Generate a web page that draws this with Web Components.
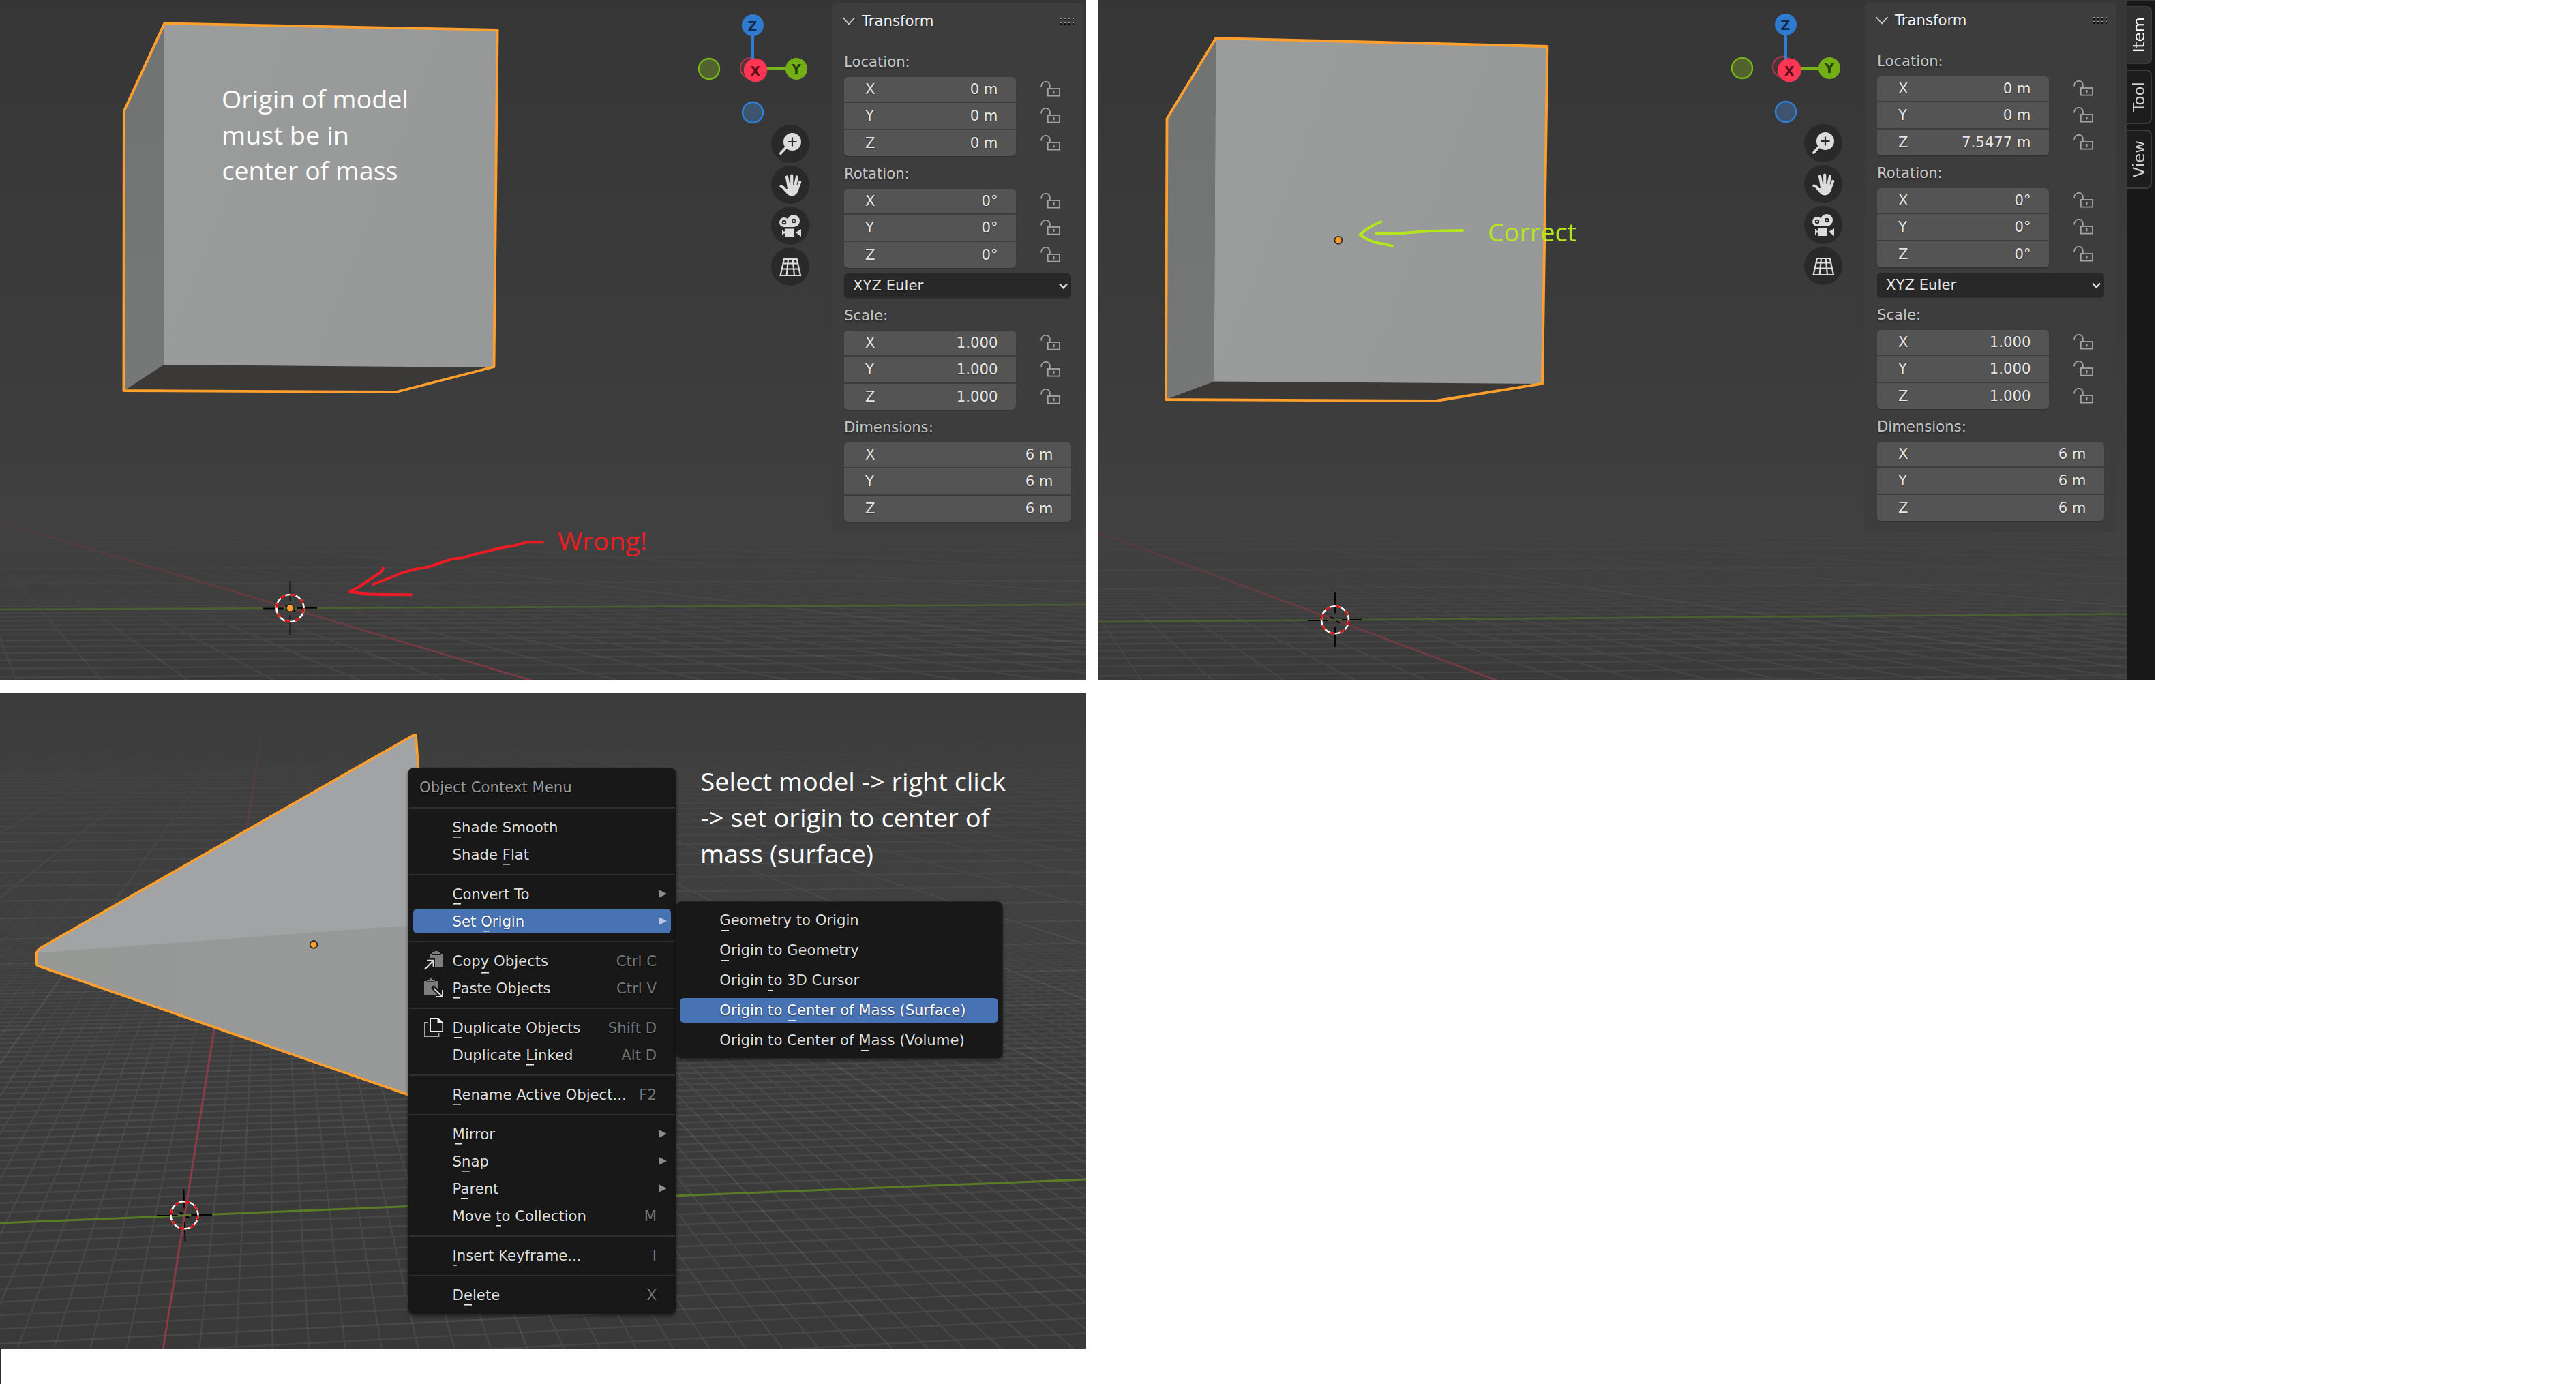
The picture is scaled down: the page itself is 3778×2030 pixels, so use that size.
<!DOCTYPE html>
<html lang="en">
<head>
<meta charset="utf-8">
<title>Setting the model origin</title>
<style>
html,body{margin:0;background:#fff}
body{font-family:"DejaVu Sans",sans-serif;font-size:21.2px;color:#e6e6e6;width:3778px;height:2030px;overflow:hidden}
</style>
</head>
<body>
<guide-page></guide-page>
<script>
const define = (name, html) => customElements.define(name, class extends HTMLElement {
  connectedCallback() {
    if (this.shadowRoot) return;
    const a = (k, d = '') => this.getAttribute(k) ?? d;
    this.attachShadow({mode: 'open'}).innerHTML = typeof html === 'function' ? html(a) : html;
  }
});

/* ---------- 3D scenes ---------- */
/* Perspective floor: row k lies 1/(d0 - s*k) below the horizon h, columns fan out of (px, py). */
function floor(o) {
  let minor = '', major = '';
  const r = o.right + 5, l = o.left - 5;
  for (let k = -400; k <= 40; k++) {
    const d = o.d0 - o.s * k;
    if (k === 0 || d <= 0) continue;
    const t = 1 / d, y = o.h + t, slope = (o.vy - y) / o.vx;
    const big = k % 10 === 0, gap = o.s * t * t * (big ? 10 : 1);
    const op = Math.min(1, Math.max(0, (gap - .8) / 4));
    if (op < .02) continue;
    const line = `<path d="M${l} ${(y + slope * (l - o.left)).toFixed(1)}L${r} ${(y + slope * (r - o.left)).toFixed(1)}" stroke-opacity="${op.toFixed(2)}"/>`;
    if (big) major += line; else minor += line;
  }
  for (let k = -60; k <= 90; k++) {
    if (k === 0) continue;
    const x = o.cx + o.step * k;
    if (k % 10 === 0) major += `<path d="M${o.px} ${o.py}L${x} ${o.base}"/>`;
    else minor += `<path d="M${o.px} ${o.py}L${x} ${o.base}"/>`;
  }
  for (let k = 10; k <= 60; k++) major += `<path d="M${o.px} ${o.py}L${o.cx + o.step * 10 * k} ${o.base}"/>`;
  const w = r - l;
  const g = (id, a, b) => `<linearGradient id="g${id}" gradientUnits="userSpaceOnUse" x1="0" x2="0" y1="${o.h + a}" y2="${o.h + b}"><stop offset="0" stop-color="#000"/><stop offset="1" stop-color="#fff"/></linearGradient><mask id="m${id}" maskUnits="userSpaceOnUse" x="${l}" y="0" width="${w}" height="2030"><rect x="${l}" y="0" width="${w}" height="2030" fill="url(#g${id})"/></mask>`;
  return `<defs>${g('a', ...o.fadeMinor)}${g('b', ...o.fadeMajor)}</defs>
  <g fill="none" stroke="#fff" stroke-width="2.4"><g mask="url(#ma)" opacity="${o.alpha}">${minor}</g><g mask="url(#mb)" opacity="${o.alpha * 1.2}">${major}</g></g>`;
}
const cursor = (x, y, l, r, t, b, tilt = 0) => `<g fill="none"><path d="M${x - tilt} ${t}L${x - tilt / 4} ${y - 10}M${x + tilt / 4} ${y + 10}L${x + tilt} ${b}" stroke="#000" stroke-width="1.8"/><path d="M${l} ${y + .6}H${x - 10}M${x + 10} ${y - .3}H${r}" stroke="#000" stroke-width="2"/><path d="M${x - 7} ${y - 4}l5 2M${x + 2} ${y + 2}l5 2" stroke="#000" stroke-width="2"/><circle cx="${x}" cy="${y}" r="20" stroke="#fff" stroke-width="2.6"/><circle cx="${x}" cy="${y}" r="20" stroke="#f00b0b" stroke-width="2.6" stroke-dasharray="7.85 7.86"/></g>`;
const dot = (x, y) => `<circle cx="${x}" cy="${y}" r="5.4" fill="#ff9d2b" stroke="#2c2c2c" stroke-width="1.8"/>`;
const note = (x, y, len, txt, fill = '#fff', size = 37) => `<text x="${x}" y="${y}" textLength="${len}" lengthAdjust="spacingAndGlyphs" fill="${fill}" font-family="'Open Sans','Noto Sans',sans-serif" font-size="${size}">${txt}</text>`;
const cube = (sil, side, front, bottom) => `<polygon points="${bottom}" fill="#3b3937"/><polygon points="${side}" fill="url(#side)"/><polygon points="${front}" fill="url(#front)"/><polygon points="${sil}" fill="none" stroke="#ff9f2d" stroke-width="3.8" stroke-linejoin="round"/>`;
const shades = `<defs><linearGradient id="bg" x1="0" y1="0" x2="0" y2="1"><stop offset="0" stop-color="#363636"/><stop offset=".55" stop-color="#3c3c3c"/><stop offset=".78" stop-color="#404040"/><stop offset="1" stop-color="#3a3a3a"/></linearGradient><linearGradient id="front" x1="0" y1="0" x2="1" y2=".4"><stop offset="0" stop-color="#9b9c9c"/><stop offset="1" stop-color="#979898"/></linearGradient><linearGradient id="side" x1="0" y1="0" x2="0" y2="1"><stop offset="0" stop-color="#717372"/><stop offset="1" stop-color="#767877"/></linearGradient></defs>`;

const scenes = {
  wrong: () => `<svg viewBox="0 0 1593 998">${shades}<rect width="1593" height="998" fill="url(#bg)"/>
  ${floor({left: 0, right: 1593, h: 744, d0: .00667, s: .000222, vx: 37500, vy: 744, px: -74, py: 744, cx: 780, base: 998, step: 126, alpha: .05, fadeMinor: [70, 200], fadeMajor: [20, 200]})}
  <linearGradient id="red" gradientUnits="userSpaceOnUse" x1="0" y1="0" x2="781" y2="0"><stop offset="0" stop-color="#4b3d3e"/><stop offset=".45" stop-color="#663a3e"/><stop offset="1" stop-color="#7d3a44"/></linearGradient>
  <path d="M0 766L425 892L781 998.5" stroke="url(#red)" stroke-width="2.6" fill="none"/><path d="M0 894L1593 887" stroke="#4b6032" stroke-width="2.6"/>
  ${cube('241.2,34.4 729.6,43.9 724.5,538 581,575 181.4,573 181.8,163', '241,35 240,535 182,573 182,163', '241,35 729,44 724,539 240,535', '182,573 240,534 724,537 581,575')}
  ${cursor(425.5, 892, 386, 465, 852, 932)}${dot(425.5, 892)}
  <g fill="none" stroke="#ed1c24" stroke-width="4" stroke-linejoin="round" stroke-linecap="round"><path d="M796 795.3L773.6 795L752.5 800.7L737 803L720.7 807L692 814L680 818L663 820L628 831.5L609 834.7L590 840L577 845.5L547 857"/><path d="M562 832.5Q562 838 553 843L542 850L526 861L512.8 868L524 869L539 871.5L562 872L603 872.3"/></g>
  ${note(325, 158.5, 274, 'Origin of model')}${note(325, 211.5, 187, 'must be in')}${note(325.5, 264, 258, 'center of mass')}
  ${note(818, 806.5, 131, 'Wrong!', '#ed1c24')}</svg>`,
  correct: () => `<svg viewBox="1610 0 1509 998">${shades}<rect x="1610" width="1509" height="998" fill="url(#bg)"/>
  ${floor({left: 1610, right: 3119, h: 740, d0: .0058, s: .000228, vx: 24000, vy: 740, px: 1500, py: 740, cx: 2197, base: 998, step: 104.6, alpha: .05, fadeMinor: [70, 200], fadeMajor: [20, 200]})}
  <linearGradient id="red" gradientUnits="userSpaceOnUse" x1="1610" y1="0" x2="2197" y2="0"><stop offset="0" stop-color="#553c3e"/><stop offset="1" stop-color="#7d3a44"/></linearGradient>
  <path d="M1610 780.7L1958 909.2L2196.5 998.5" stroke="url(#red)" stroke-width="2.6" fill="none"/><path d="M1610 912L3119 900.5" stroke="#4b6032" stroke-width="2.6"/>
  ${cube('1783.2,56.1 2269.4,68 2262,562.7 2106,588 1710,586 1711.5,174', '1783,57 1780.6,559.5 1710,586 1712,174', '1783,57 2269,69 2262,563 1780.6,559.5', '1710,586 1780.6,558.5 2262,561 2106,588')}
  ${dot(1962.8, 352.3)}${cursor(1958, 909.3, 1919, 1997, 869, 949)}
  <g fill="none" stroke="#b5e61d" stroke-width="4" stroke-linejoin="round" stroke-linecap="round"><path d="M2018 343H2045L2074.5 340.6L2097.5 339L2145 338"/><path d="M2025 325.4Q2020 327 2008 334Q2001 338 1994.4 344.4Q2002 350 2016 355.5L2030 358L2042 361"/></g>
  ${note(2182, 353.5, 130, 'Correct', '#b5e61d')}</svg>`,
  fix: () => `<svg viewBox="0 1016 1593 962"><defs><linearGradient id="bg" x1="0" y1="0" x2="0" y2="1"><stop offset="0" stop-color="#3b3b3b"/><stop offset=".15" stop-color="#3f3f3f"/><stop offset="1" stop-color="#393939"/></linearGradient><linearGradient id="low" x1="0" x2="1"><stop offset="0" stop-color="#969896"/><stop offset="1" stop-color="#98999a"/></linearGradient></defs><rect y="1016" width="1593" height="962" fill="url(#bg)"/>
  ${floor({left: 0, right: 1593, h: 1001, d0: .001263, s: .0000232, vx: 18100, vy: 1066, px: 395, py: 1002, cx: 239.2, base: 1977.5, step: 53.4, alpha: .066, fadeMinor: [200, 600], fadeMajor: [40, 480]})}
  <linearGradient id="red" gradientUnits="userSpaceOnUse" x1="0" y1="1040" x2="0" y2="1520"><stop offset="0" stop-color="#8c3a46" stop-opacity="0"/><stop offset="1" stop-color="#8c3a46"/></linearGradient>
  <path d="M239.2 1978L270.9 1782.3L314.4 1507.7L361.8 1217L386 1060" stroke="url(#red)" stroke-width="3" fill="none"/><path d="M0 1794L598 1769.5L1593 1730" stroke="#5a7c26" stroke-width="3" fill="none"/>
  <polygon points="52.6,1398 59.3,1390 608,1077.7 614.5,1127 700,1626 597.5,1605.3 56.5,1417 52.6,1414" fill="#a2a3a4"/><polygon points="54,1397.8 598,1357.4 700,1350 700,1626 597.5,1605.3 56.5,1417 52.6,1414" fill="url(#low)"/>
  <path d="M660 1628L597.5 1605.3L56.5 1417Q53.5 1416 53.5 1413V1398Q56 1392 60 1390L606 1078.5Q609.5 1077 610 1079L613.5 1127V1150" fill="none" stroke="#ff9f2d" stroke-width="3.6"/>
  ${dot(460, 1385.4)}${cursor(270.5, 1782.3, 230, 311, 1744.6, 1820.6, 1)}
  ${note(1027.5, 1160, 447.5, 'Select model -&gt; right click')}${note(1027.5, 1213, 424, '-&gt; set origin to center of')}${note(1027, 1266, 254, 'mass (surface)')}</svg>`
};
define('scene-view', a => `<style>:host{display:block;line-height:0}svg{display:block;width:100%;height:100%}</style>${scenes[a('kind')]()}`);

/* ---------- navigation widgets ---------- */
define('axis-gizmo', a => {
  const n = a('variant') === 'b', x = n ? 86.4 : 85, y = n ? 104 : 103, rx = n ? 77 : 78, ry = n ? 99 : 100;
  return `<style>:host{display:block}svg{display:block}text{font:bold 19px "DejaVu Sans",sans-serif;text-anchor:middle}</style>
  <svg width="164" height="183" viewBox="0 0 164 183"><circle cx="17" cy="101" r="15" fill="#52632f" stroke="#77b41a" stroke-width="2.4"/><circle cx="81" cy="165" r="15" fill="#3c5470" stroke="#2f7fd6" stroke-width="2.4"/><circle cx="${rx}" cy="${ry}" r="15" fill="#4a3437" stroke="#9b3a48" stroke-width="2.4"/><path d="M81 37V100" stroke="#2f7fd6" stroke-width="4"/><path d="M85 101H145" stroke="#77b41a" stroke-width="4"/><circle cx="81" cy="37" r="16" fill="#2f7bd0"/><circle cx="145" cy="101" r="16" fill="#74ae17"/><circle cx="${x}" cy="${y}" r="17.3" fill="#ff3653"/><text x="80.5" y="45" fill="#0f2a4a">Z</text><text x="145" y="107.5" fill="#27400a">Y</text><text x="${x - .3}" y="${y + 7.6}" fill="#5c0c1b">X</text></svg>`;
});
const navIcons = {
  zoom: '<circle cx="19" cy="13" r="13" fill="#dcdcdc"/><path d="M2 30L11 20" stroke="#dcdcdc" stroke-width="4" stroke-linecap="round"/><path d="M19 6.5V19.5M12.5 13H25.5" stroke="#2a2a2a" stroke-width="2.2"/>',
  hand: '<g stroke="#dcdcdc" stroke-width="4.2" stroke-linecap="round"><path d="M11 4.5L13.6 18M18.2 2.5V18M26 4.5L23 18M30.2 12L26.5 22M2.4 18.5Q6 19 9 24"/></g><path d="M11.5 16H25.4L28.4 18.5Q28 32 18 32.5Q13 32.5 8.5 26L6 22L11.8 22Z" fill="#dcdcdc"/>',
  camera: '<g fill="#dcdcdc"><circle cx="7" cy="11" r="7"/><circle cx="21" cy="9" r="9"/><path d="M7 10H21V18H7ZM8.5 20.5H22V32H8.5ZM4 22H5.5V24.5H9V27.5H5.5V30H4ZM24 26L32 21V32Z"/></g><g fill="none" stroke="#2a2a2a" stroke-width="2"><circle cx="7" cy="11" r="2.3"/><circle cx="21.3" cy="9" r="2.3"/></g>',
  grid: '<path d="M7 5H25.7L31 29H1.6ZM5.6 11.5H27M3.6 19.5H29M13 5L10.6 29M19.6 5L22 29" fill="none" stroke="#dcdcdc" stroke-width="2.2"/>'
};
define('nav-button', a => `<style>:host{display:flex;width:56px;height:56px;border-radius:50%;background:#292929;align-items:center;justify-content:center}svg{overflow:visible}</style><svg width="32" height="32" viewBox="0 0 32 32">${navIcons[a('icon')]}</svg>`);
define('nav-column', a => `<style>:host{display:flex;flex-direction:column;align-items:flex-end;width:164px}nav{display:flex;flex-direction:column;gap:4px}</style><axis-gizmo variant="${a('variant')}"></axis-gizmo><nav><nav-button icon="zoom"></nav-button><nav-button icon="hand"></nav-button><nav-button icon="camera"></nav-button><nav-button icon="grid"></nav-button></nav>`);

/* ---------- side panel ---------- */
define('lock-toggle', `<style>:host{display:flex;align-items:center;width:30px;padding-bottom:2px}svg{display:block}</style><svg width="30" height="23" viewBox="0 0 30 23" fill="none" stroke="#a3a3a3" stroke-width="1.8"><path d="M1 8.5C1 -1.5 13.8 -1.5 13.8 7V11"/><rect x="10.8" y="11" width="17.2" height="10.6"/><path d="M19.3 14V18.4" stroke-width="2.4"/></svg>`);
define('number-group', a => {
  const vals = a('values').split('|'), locks = a('locks') === 'yes';
  return `<style>:host{display:flex;justify-content:space-between}
  .f{display:flex;flex-direction:column;gap:2px;width:${locks ? 252 : 333}px;border-radius:6px;overflow:hidden}
  .wrap{border-radius:6px;box-shadow:0 2px 1px #343434}
  .r,.l lock-toggle{height:38px;box-sizing:border-box}.r:first-child,.l lock-toggle:first-child{height:36px}
  .r{background:#545454;display:flex;justify-content:space-between;align-items:center;padding:0 26.5px 2px 31px;color:#e6e6e6;text-shadow:0 1px 2px #0006}
  .l{display:flex;flex-direction:column;gap:2px;margin-right:15px}</style>
  <div class="wrap"><div class="f">${'XYZ'.split('').map((c, i) => `<div class="r"><span>${c}</span><span>${vals[i]}</span></div>`).join('')}</div></div>
  ${locks ? '<div class="l"><lock-toggle></lock-toggle><lock-toggle></lock-toggle><lock-toggle></lock-toggle></div>' : ''}`;
});
define('select-box', `<style>:host{display:flex;justify-content:space-between;align-items:center;height:36px;box-sizing:border-box;padding:0 5px 2px 13px;margin-top:8px;background:#282828;border-radius:6px;box-shadow:0 2px 1px #363636;text-shadow:0 1px 2px #0006}</style><slot></slot><svg width="13" height="9" viewBox="0 0 13 9" style="margin-top:3px"><path d="M1 1.5L6.5 7.2L12 1.5" fill="none" stroke="#e0e0e0" stroke-width="2.4"/></svg>`);
define('group-label', `<style>:host{display:flex;align-items:center;height:48px;box-sizing:border-box;padding-top:3px;color:#c4c4c4;text-shadow:0 2px 3px #0007}</style><slot></slot>`);
define('transform-panel', a => `<style>:host{display:block;width:369px;height:777px;box-sizing:border-box;padding:0 18px;background:#3d3d3d;border-radius:8px}
 header{display:flex;align-items:center;height:51px;margin:0 -4px 9px -3px;color:#f2f2f2;text-shadow:0 1px 2px #0006;gap:9px}b{font-weight:400;flex:1}</style>
 <header><svg width="20" height="12" viewBox="0 0 20 12"><path d="M1.5 1L10 10.5L18.5 1" fill="none" stroke="#cfcfcf" stroke-width="1.8"/></svg><b>Transform</b><svg width="20" height="10" viewBox="0 0 20 10">${[0, 6, 12, 18].map(x => `<path d="M${x} 1h2M${x} 7h2" stroke="#999" stroke-width="2"/><path d="M${x} 3h2M${x} 9h2" stroke="#0a0a0a" stroke-width="2"/>`).join('')}</svg></header>
 <group-label>Location:</group-label><number-group locks="yes" values="0 m|0 m|${a('z', '0 m')}"></number-group>
 <group-label>Rotation:</group-label><number-group locks="yes" values="0°|0°|0°"></number-group>
 <select-box>XYZ Euler</select-box>
 <group-label>Scale:</group-label><number-group locks="yes" values="1.000|1.000|1.000"></number-group>
 <group-label>Dimensions:</group-label><number-group values="6 m|6 m|6 m"></number-group>`);
define('side-tab', a => `<style>:host{display:flex;align-items:center;justify-content:center;box-sizing:border-box;width:37px;height:${a('size')}px;border:2px solid #3c3c3c;border-left:0;border-radius:0 8px 8px 0;background:${a('on') ? '#303030' : '#1d1d1d'};color:${a('on') ? '#fff' : '#cfcfcf'};font-size:23px}span{writing-mode:vertical-rl;transform:rotate(180deg);line-height:34px}</style><span><slot></slot></span>`);
define('side-tabs', `<style>:host{display:flex;flex-direction:column;gap:8px;width:41px;height:998px;box-sizing:border-box;padding-top:8px;background:#181818;border-top:1px solid #333}</style><side-tab size="85" on="1">Item</side-tab><side-tab size="80">Tool</side-tab><side-tab size="87">View</side-tab>`);

/* ---------- viewport frame ---------- */
define('view-port', a => `<style>:host{display:flex;width:${a('w')}px;height:${a('h')}px}.v{display:grid;position:relative;flex:1;min-width:0;overflow:hidden}.v>*{grid-area:1/1}.hud{display:flex;justify-content:flex-end;align-items:flex-start;gap:33px;z-index:1}</style><div class="v"><scene-view kind="${a('kind')}"></scene-view><div class="hud"><slot></slot></div></div><slot name="tabs"></slot>`);

/* ---------- menus ---------- */
const menuIcons = {
  copy: '<path d="M8 4H12V2H15.5V0H20V2H23.5V4H28V24H16V10H8Z" fill="#7d7d7d"/><path d="M11 5.2H24.5" stroke="#181818" stroke-width="1.6"/><path d="M0.8 27L13 14.5M4 13.8H13.6V24" fill="none" stroke="#e0e0e0" stroke-width="2"/>',
  paste: '<path d="M0 4H4V2H8V0H12V2H16V4H20V24H0Z" fill="#7d7d7d"/><path d="M3.5 5.2H16.5" stroke="#181818" stroke-width="1.6"/><path d="M14 14L27 27" stroke="#181818" stroke-width="6.5" stroke-linecap="round"/><path d="M14 14.5L26.5 26.5M18 27H27V17" fill="none" stroke="#e0e0e0" stroke-width="2"/>',
  dup: '<path d="M6 7H1V27H21.4V22" fill="none" stroke="#a5a5a5" stroke-width="2"/><path d="M9 1H21L27.4 7.5V20H9Z" fill="none" stroke="#f0f0f0" stroke-width="2"/><path d="M19.5 0V8H28Z" fill="#f0f0f0"/>'
};
define('menu-row', a => {
  const t = a('label'), i = +a('accel', 0), deep = a('deep') ? 6.5 : 3.2;
  return `<style>:host{display:flex;align-items:center;height:36px;flex:none;margin:1px 7px 3px;border-radius:6px;padding:0 ${a('sub') ? 6 : 21}px 0 16px;color:${a('hl') ? '#fff' : '#dedede'};background:${a('hl') ? '#4772b3' : 'transparent'};text-shadow:0 1px 2px #0008;white-space:pre;box-sizing:border-box}
  i{width:41.6px;height:28px;flex:none}i svg{display:block}b{font-weight:400;flex:1}em{font-style:normal;color:#777}
  u{text-decoration:none;padding-bottom:${deep}px;background:linear-gradient(#e6e6e6,#e6e6e6) 50% 100%/11px 1.6px no-repeat}
  :host([flat]){margin:0 6px 8px 5px;padding:0 0 1px 58.3px}:host([flat]) i{display:none}</style>
  <i>${a('icon') ? `<svg width="28" height="28" viewBox="0 0 28 28">${menuIcons[a('icon')]}</svg>` : ''}</i><b>${t.slice(0, i)}<u>${t[i]}</u>${t.slice(i + 1)}</b>${a('key') ? `<em>${a('key')}</em>` : ''}${a('sub') ? `<svg width="12" height="12" viewBox="0 0 12 12"><path d="M0 0L12 6L0 12Z" fill="${a('hl') ? '#b5c7e1' : '#8c8c8c'}"/></svg>` : ''}`;
});
define('menu-rule', `<style>:host{display:block;flex:none;height:2px;margin:8px 1px;background:#2f2f2f}</style>`);
define('menu-title', `<style>:host{display:flex;flex:none;align-items:center;height:49px;box-sizing:border-box;padding:5px 0 0 16px;color:#989898;text-shadow:0 1px 2px #000}</style><slot></slot>`);
define('pop-menu', `<style>:host{display:flex;flex-direction:column;position:absolute;box-sizing:border-box;background:#181818;border-radius:8px;box-shadow:0 0 0 1px #242424,0 2px 4px 1px #0007}</style><slot></slot>`);

define('guide-page', `<style>:host{display:flex;flex-direction:column;gap:18px;width:3778px;height:2030px;background:#fff}
.top{display:flex;gap:17px}.low{display:flex;flex-direction:column}
nav-column.b{margin-top:-1px}transform-panel{margin:5px 4px 0 0}transform-panel.b{margin:4px 15px 0 0}
.main{left:599px;top:111px;width:392px;height:800px}.sub{left:992px;top:307px;width:478px;height:229px;padding-top:9px}
.edge{width:1px;height:52px;background:#303030}</style>
<div class="top">
 <view-port w="1593" h="998" kind="wrong"><nav-column></nav-column><transform-panel></transform-panel></view-port>
 <view-port w="1550" h="998" kind="correct"><nav-column class="b" variant="b"></nav-column><transform-panel class="b" z="7.5477 m"></transform-panel><side-tabs slot="tabs"></side-tabs></view-port>
</div>
<div class="low">
 <view-port w="1593" h="962" kind="fix">
  <pop-menu class="main"><menu-title>Object Context Menu</menu-title><menu-rule></menu-rule>
   <menu-row label="Shade Smooth"></menu-row><menu-row label="Shade Flat" accel="6"></menu-row><menu-rule></menu-rule>
   <menu-row label="Convert To" sub="1"></menu-row><menu-row label="Set Origin" accel="4" sub="1" hl="1"></menu-row><menu-rule></menu-rule>
   <menu-row label="Copy Objects" accel="3" deep="1" icon="copy" key="Ctrl C"></menu-row><menu-row label="Paste Objects" icon="paste" key="Ctrl V"></menu-row><menu-rule></menu-rule>
   <menu-row label="Duplicate Objects" icon="dup" key="Shift D"></menu-row><menu-row label="Duplicate Linked" accel="10" key="Alt D"></menu-row><menu-rule></menu-rule>
   <menu-row label="Rename Active Object..." key="F2"></menu-row><menu-rule></menu-rule>
   <menu-row label="Mirror" sub="1"></menu-row><menu-row label="Snap" accel="1" sub="1"></menu-row><menu-row label="Parent" accel="1" sub="1"></menu-row><menu-row label="Move to Collection" accel="5" key="M"></menu-row><menu-rule></menu-rule>
   <menu-row label="Insert Keyframe..." key="I"></menu-row><menu-rule></menu-rule>
   <menu-row label="Delete" accel="1" key="X"></menu-row></pop-menu>
  <pop-menu class="sub"><menu-row flat label="Geometry to Origin"></menu-row><menu-row flat label="Origin to Geometry"></menu-row><menu-row flat label="Origin to 3D Cursor" accel="7"></menu-row><menu-row flat hl="1" label="Origin to Center of Mass (Surface)" accel="10"></menu-row><menu-row flat label="Origin to Center of Mass (Volume)" accel="20"></menu-row></pop-menu>
 </view-port>
 <div class="edge"></div>
</div>`);
</script>
</body>
</html>
